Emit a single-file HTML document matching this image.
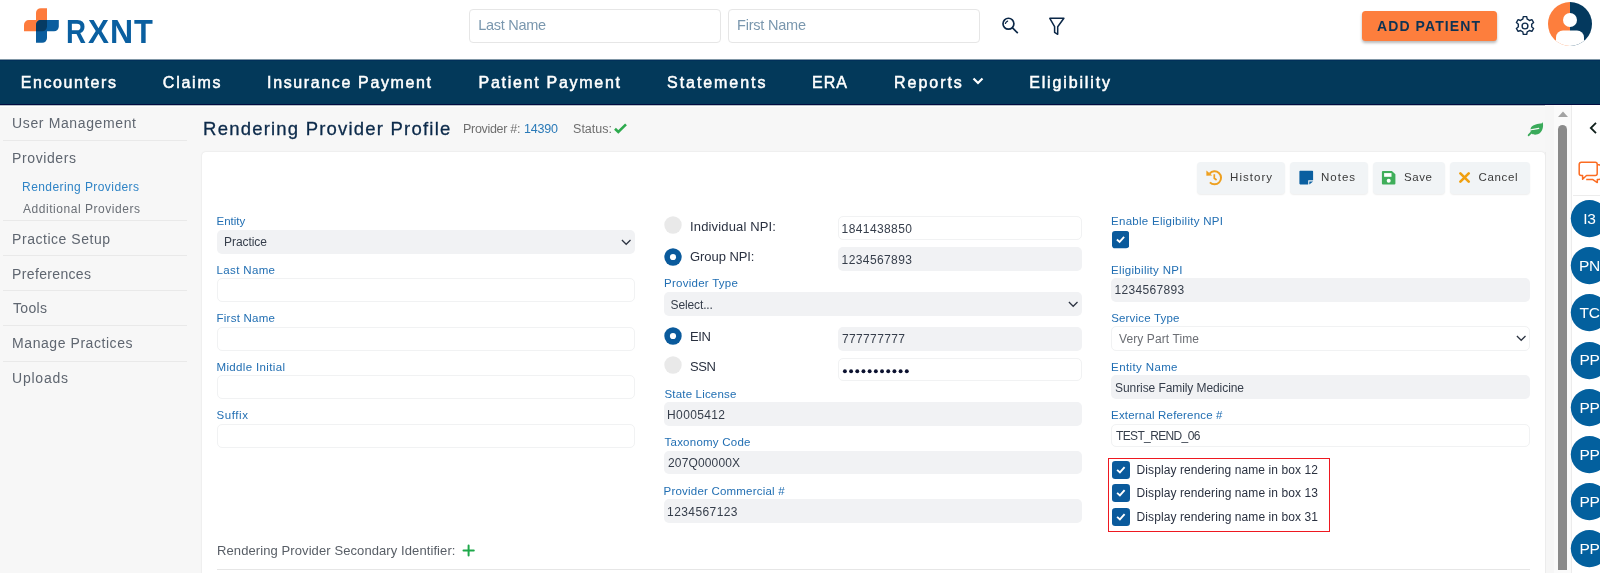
<!DOCTYPE html>
<html><head><meta charset="utf-8"><style>
html,body{margin:0;padding:0;width:1600px;height:573px;overflow:hidden;background:#f7f7f7;position:relative;font-family:"Liberation Sans", sans-serif}
.t{position:absolute;white-space:nowrap;line-height:1;will-change:opacity}
</style></head><body>
<div style="position:absolute;left:0px;top:0px;width:1600px;height:59px;background:#fff"></div>
<svg style="position:absolute;left:0px;top:0px" width="70" height="50" viewBox="0 0 70 50">
<path d="M40.8 8.2 H47 V26.5 A4.8 4.8 0 0 1 42.2 31.3 H24 V24.9 A4.8 4.8 0 0 1 28.8 20.1 H36 V13 A4.8 4.8 0 0 1 40.8 8.2 Z" fill="#fd7b3c"/>
<path d="M40.8 20.1 H58.8 V26.5 A4.8 4.8 0 0 1 54 31.3 H47 V38 A4.8 4.8 0 0 1 42.2 42.8 H36 V24.9 A4.8 4.8 0 0 1 40.8 20.1 Z" fill="#0a5d9e"/>
<path d="M40.8 20.1 H47 V26.5 A4.8 4.8 0 0 1 42.2 31.3 H36 V24.9 A4.8 4.8 0 0 1 40.8 20.1 Z" fill="#063b63"/>
</svg>
<div style="position:absolute;left:65.90px;top:15.07px;font-size:33px;line-height:1;font-weight:bold;color:#0a5fa0;transform:scaleX(0.84);transform-origin:0 0;will-change:opacity">R</div>
<div style="position:absolute;left:88.00px;top:15.07px;font-size:33px;line-height:1;font-weight:bold;color:#0a5fa0;transform:scaleX(0.95);transform-origin:0 0;will-change:opacity">X</div>
<div style="position:absolute;left:110.10px;top:15.07px;font-size:33px;line-height:1;font-weight:bold;color:#0a5fa0;transform:scaleX(0.97);transform-origin:0 0;will-change:opacity">N</div>
<div style="position:absolute;left:134.40px;top:15.07px;font-size:33px;line-height:1;font-weight:bold;color:#0a5fa0;transform:scaleX(0.935);transform-origin:0 0;will-change:opacity">T</div>
<div style="position:absolute;left:469px;top:9px;width:251.5px;height:33.6px;box-sizing:border-box;border:1px solid #e6e6e6;border-radius:4px;background:#fff"></div>
<div style="position:absolute;left:728px;top:9px;width:251.5px;height:33.6px;box-sizing:border-box;border:1px solid #e6e6e6;border-radius:4px;background:#fff"></div>
<div class="t" style="left:478.14px;top:18.13px;font-size:14.5px;color:#7a97ae;letter-spacing:-0.264px;">Last Name</div>
<div class="t" style="left:737.12px;top:18.13px;font-size:14.5px;color:#7a97ae;letter-spacing:-0.226px;">First Name</div>
<svg style="position:absolute;left:998px;top:14px" width="24" height="24" viewBox="0 0 24 24">
<circle cx="10.45" cy="9.7" r="5.45" fill="none" stroke="#0b2747" stroke-width="1.7"/>
<path d="M14.3 13.7 L19.8 19.2" stroke="#0b2747" stroke-width="1.7"/>
<path d="M7.4 9.5 Q7.9 7.9 9.6 7.1" stroke="#0b2747" stroke-width="1.2" fill="none" stroke-linecap="round"/>
</svg>
<svg style="position:absolute;left:1044px;top:14px" width="24" height="24" viewBox="0 0 24 24">
<path d="M5.8 4.3 H19.9 L13.7 12.7 V20.3 L10.6 18.4 V12.7 Z" fill="none" stroke="#0b2747" stroke-width="1.5" stroke-linejoin="round"/>
</svg>
<div style="position:absolute;left:1362px;top:10.6px;width:135px;height:30.4px;background:#fd7e3d;border-radius:3.5px;box-shadow:0 2px 3px rgba(0,0,0,.28)"></div>
<div class="t" style="left:1377.00px;top:18.95px;font-size:14px;color:#0d3354;letter-spacing:1.097px;font-weight:bold;">ADD PATIENT</div>
<svg style="position:absolute;left:1513px;top:14.4px" width="24" height="24" viewBox="0 0 24 24">
<path d="M10.3 2.6 h3.4 l0.5 2.6 a7.2 7.2 0 0 1 2.2 1.3 l2.5 -0.9 l1.7 2.9 l-2 1.7 a7.2 7.2 0 0 1 0 2.6 l2 1.7 l-1.7 2.9 l-2.5 -0.9 a7.2 7.2 0 0 1 -2.2 1.3 l-0.5 2.6 h-3.4 l-0.5 -2.6 a7.2 7.2 0 0 1 -2.2 -1.3 l-2.5 0.9 l-1.7 -2.9 l2 -1.7 a7.2 7.2 0 0 1 0 -2.6 l-2 -1.7 l1.7 -2.9 l2.5 0.9 a7.2 7.2 0 0 1 2.2 -1.3 z" fill="none" stroke="#0d2a4a" stroke-width="1.4" stroke-linejoin="round"/>
<circle cx="12" cy="12" r="2.9" fill="none" stroke="#0d2a4a" stroke-width="1.4"/>
</svg>
<svg style="position:absolute;left:1548px;top:2px" width="44" height="44" viewBox="0 0 44 44">
<defs><clipPath id="cc"><circle cx="22" cy="22" r="22"/></clipPath></defs>
<g clip-path="url(#cc)">
<rect x="0" y="0" width="22" height="44" fill="#fd7e3d"/>
<rect x="22" y="0" width="22" height="44" fill="#04395e"/>
<circle cx="22" cy="18" r="7" fill="#fff"/>
<rect x="8" y="28.5" width="28" height="20" rx="7" fill="#fff"/>
</g></svg>
<div style="position:absolute;left:0px;top:60px;width:1600px;height:45px;background:#03395a"></div>
<div style="position:absolute;left:0px;top:104px;width:1600px;height:1px;background:#020c40"></div>
<div style="position:absolute;left:0px;top:59px;width:1600px;height:1px;background:#8096a6"></div>
<div style="position:absolute;left:0px;top:60px;width:1600px;height:1px;background:#01305a"></div>
<div class="t" style="left:20.64px;top:74.56px;font-size:16px;color:#fff;letter-spacing:1.598px;-webkit-text-stroke:0.5px #fff;">Encounters</div>
<div class="t" style="left:162.85px;top:74.56px;font-size:16px;color:#fff;letter-spacing:1.748px;-webkit-text-stroke:0.5px #fff;">Claims</div>
<div class="t" style="left:267.10px;top:74.56px;font-size:16px;color:#fff;letter-spacing:1.628px;-webkit-text-stroke:0.5px #fff;">Insurance Payment</div>
<div class="t" style="left:478.60px;top:74.56px;font-size:16px;color:#fff;letter-spacing:1.714px;-webkit-text-stroke:0.5px #fff;">Patient Payment</div>
<div class="t" style="left:667.10px;top:74.56px;font-size:16px;color:#fff;letter-spacing:1.932px;-webkit-text-stroke:0.5px #fff;">Statements</div>
<div class="t" style="left:812.10px;top:74.56px;font-size:16px;color:#fff;letter-spacing:1.000px;-webkit-text-stroke:0.5px #fff;">ERA</div>
<div class="t" style="left:894.10px;top:74.56px;font-size:16px;color:#fff;letter-spacing:1.947px;-webkit-text-stroke:0.5px #fff;">Reports</div>
<div class="t" style="left:1029.16px;top:74.56px;font-size:16px;color:#fff;letter-spacing:1.860px;-webkit-text-stroke:0.5px #fff;">Eligibility</div>
<svg style="position:absolute;left:970px;top:75px" width="16" height="12" viewBox="0 0 16 12">
<path d="M3.5 3.5 L8 8 L12.5 3.5" fill="none" stroke="#fff" stroke-width="2.2"/></svg>
<div style="position:absolute;left:0px;top:105px;width:1600px;height:468px;background:#f7f7f7"></div>
<div style="position:absolute;left:0px;top:105px;width:1600px;height:1px;background:#b9c3c9"></div>
<div style="position:absolute;left:0px;top:106px;width:1600px;height:1px;background:#ffffff"></div>
<div class="t" style="left:12.10px;top:116.15px;font-size:14px;color:#5f6670;letter-spacing:0.624px;">User Management</div>
<div style="position:absolute;left:3px;top:140px;width:184px;height:1px;background:#e9e9e9"></div>
<div class="t" style="left:12.10px;top:151.15px;font-size:14px;color:#5f6670;letter-spacing:0.589px;">Providers</div>
<div class="t" style="left:22.06px;top:180.74px;font-size:12px;color:#2f84c6;letter-spacing:0.419px;">Rendering Providers</div>
<div class="t" style="left:22.96px;top:203.34px;font-size:12px;color:#6a6f76;letter-spacing:0.543px;">Additional Providers</div>
<div style="position:absolute;left:3px;top:220px;width:184px;height:1px;background:#e9e9e9"></div>
<div class="t" style="left:12.10px;top:231.75px;font-size:14px;color:#5f6670;letter-spacing:0.527px;">Practice Setup</div>
<div class="t" style="left:12.10px;top:266.65px;font-size:14px;color:#5f6670;letter-spacing:0.342px;">Preferences</div>
<div class="t" style="left:13.00px;top:301.07px;font-size:14px;color:#5f6670;letter-spacing:0.330px;">Tools</div>
<div class="t" style="left:12.10px;top:336.45px;font-size:14px;color:#5f6670;letter-spacing:0.558px;">Manage Practices</div>
<div class="t" style="left:12.10px;top:371.35px;font-size:14px;color:#5f6670;letter-spacing:0.755px;">Uploads</div>
<div style="position:absolute;left:3px;top:255px;width:184px;height:1px;background:#e9e9e9"></div>
<div style="position:absolute;left:3px;top:290px;width:184px;height:1px;background:#e9e9e9"></div>
<div style="position:absolute;left:3px;top:325px;width:184px;height:1px;background:#e9e9e9"></div>
<div style="position:absolute;left:3px;top:361px;width:184px;height:1px;background:#e9e9e9"></div>
<div class="t" style="left:203.10px;top:119.94px;font-size:18.5px;color:#0c2a4a;letter-spacing:1.208px;-webkit-text-stroke:0.3px #0c2a4a;">Rendering Provider Profile</div>
<div class="t" style="left:463.06px;top:122.82px;font-size:12.5px;color:#6f6f6f;letter-spacing:-0.310px;">Provider #:</div>
<div class="t" style="left:524.02px;top:122.82px;font-size:12.5px;color:#2a7ab8;letter-spacing:-0.200px;">14390</div>
<div class="t" style="left:573.10px;top:122.82px;font-size:12.5px;color:#6f6f6f;letter-spacing:-0.025px;">Status:</div>
<svg style="position:absolute;left:613px;top:122px" width="15" height="13" viewBox="0 0 15 13">
<path d="M2 6.8 L5.3 10 L13 2.3" fill="none" stroke="#2eaa4e" stroke-width="2.6"/></svg>
<svg style="position:absolute;left:1522px;top:115px" width="28" height="25" viewBox="0 0 28 25">
<path d="M8.8 13 C10 10.5 14 9 18.5 8.6 C19.5 8.5 20.3 8 20.6 7 C21.6 10 21.3 15 18 18 C15.5 20 11.5 20.3 9.5 18.5 C8.4 17.3 8.3 14.5 8.8 13 Z" fill="#3aaa5a"/>
<path d="M8.6 14.9 L16.8 13.4" stroke="#f7f7f7" stroke-width="1.1" stroke-linecap="round"/>
<path d="M6.7 20.2 L10.8 16" stroke="#3aaa5a" stroke-width="1.9" stroke-linecap="round"/>
</svg>
<div style="position:absolute;left:202px;top:152px;width:1343px;height:430px;background:#fff;border-radius:4px;box-shadow:0 0 2px rgba(0,0,0,.12)"></div>
<div style="position:absolute;left:1197px;top:162px;width:88px;height:31.5px;background:#f1f4f6;border-radius:4px;box-shadow:0 1px 1.5px rgba(0,0,0,.07)"></div>
<div class="t" style="left:1230.10px;top:172.47px;font-size:11.5px;color:#3a3a3a;letter-spacing:1.020px;">History</div>
<svg style="position:absolute;left:1205px;top:169px" width="18" height="18" viewBox="0 0 18 18">
<path d="M4.6 4.6 A6.5 6.5 0 1 1 4.9 13.4" fill="none" stroke="#eea020" stroke-width="2"/>
<path d="M1.4 1.6 L1.4 6.8 L7.2 6.5 Z" fill="#eea020"/>
<path d="M9.3 5.2 V9.3 L11.6 11" fill="none" stroke="#eea020" stroke-width="1.7"/></svg>
<div style="position:absolute;left:1290px;top:162px;width:78px;height:31.5px;background:#f1f4f6;border-radius:4px;box-shadow:0 1px 1.5px rgba(0,0,0,.07)"></div>
<div class="t" style="left:1321.08px;top:172.47px;font-size:11.5px;color:#3a3a3a;letter-spacing:0.970px;">Notes</div>
<svg style="position:absolute;left:1299px;top:170px" width="15" height="15" viewBox="0 0 15 15">
<path d="M0.4 1.6 a0.8 0.8 0 0 1 0.8 -0.8 h12.1 a0.8 0.8 0 0 1 0.8 0.8 V10.2 H9.2 V14.4 H1.2 a0.8 0.8 0 0 1 -0.8 -0.8 Z" fill="#0a5fa0"/>
<path d="M10.3 11.4 H14.1 L10.3 14.5 Z" fill="#0a5fa0"/></svg>
<div style="position:absolute;left:1373px;top:162px;width:72px;height:31.5px;background:#f1f4f6;border-radius:4px;box-shadow:0 1px 1.5px rgba(0,0,0,.07)"></div>
<div class="t" style="left:1404.04px;top:172.47px;font-size:11.5px;color:#3a3a3a;letter-spacing:0.583px;">Save</div>
<svg style="position:absolute;left:1381px;top:170px" width="15" height="15" viewBox="0 0 15 15">
<path d="M0.9 1.9 a1 1 0 0 1 1 -1 H10.9 L14.4 4.2 V13.4 a1 1 0 0 1 -1 1 H1.9 a1 1 0 0 1 -1 -1 Z" fill="#3fae5a"/>
<rect x="3.1" y="3.1" width="7.4" height="3.7" fill="#fff"/>
<circle cx="7.7" cy="10.7" r="2" fill="#fff"/></svg>
<div style="position:absolute;left:1450px;top:162px;width:80px;height:31.5px;background:#f1f4f6;border-radius:4px;box-shadow:0 1px 1.5px rgba(0,0,0,.07)"></div>
<div class="t" style="left:1478.52px;top:172.47px;font-size:11.5px;color:#3a3a3a;letter-spacing:0.632px;">Cancel</div>
<svg style="position:absolute;left:1458px;top:172px" width="13" height="12" viewBox="0 0 13 12">
<path d="M2.4 1.4 L10.7 9.7 M10.7 1.4 L2.4 9.7" stroke="#f0a010" stroke-width="2.6" stroke-linecap="round"/></svg>
<div class="t" style="left:216.54px;top:216.07px;font-size:11.5px;color:#226fb3;letter-spacing:0.000px;">Entity</div>
<div class="t" style="left:216.54px;top:265.07px;font-size:11.5px;color:#226fb3;letter-spacing:0.356px;">Last Name</div>
<div class="t" style="left:216.54px;top:313.27px;font-size:11.5px;color:#226fb3;letter-spacing:0.248px;">First Name</div>
<div class="t" style="left:216.54px;top:361.77px;font-size:11.5px;color:#226fb3;letter-spacing:0.346px;">Middle Initial</div>
<div class="t" style="left:216.54px;top:409.97px;font-size:11.5px;color:#226fb3;letter-spacing:0.570px;">Suffix</div>
<div style="position:absolute;left:216.6px;top:230px;width:418.4px;height:24px;background:#f1f2f4;border-radius:5px"></div>
<div class="t" style="left:224.04px;top:236.24px;font-size:12px;color:#363e4b;letter-spacing:-0.059px;">Practice</div>
<svg style="position:absolute;left:621px;top:239.0px" width="11" height="7" viewBox="0 0 11 7">
<path d="M0.9 1 L5.2 5.3 L9.5 1" fill="none" stroke="#2d3442" stroke-width="1.25"/></svg>
<div style="position:absolute;left:216.6px;top:278.3px;width:418.4px;height:24px;box-sizing:border-box;border:1px solid #f1f2f3;border-radius:5px;background:#fff"></div>
<div style="position:absolute;left:216.6px;top:326.5px;width:418.4px;height:24px;box-sizing:border-box;border:1px solid #f1f2f3;border-radius:5px;background:#fff"></div>
<div style="position:absolute;left:216.6px;top:375.2px;width:418.4px;height:24px;box-sizing:border-box;border:1px solid #f1f2f3;border-radius:5px;background:#fff"></div>
<div style="position:absolute;left:216.6px;top:423.5px;width:418.4px;height:24px;box-sizing:border-box;border:1px solid #f1f2f3;border-radius:5px;background:#fff"></div>
<svg style="position:absolute;left:664.3px;top:216.40px" width="18" height="18" viewBox="0 0 18 18"><circle cx="9" cy="9" r="8.7" fill="#e9e9e9"/></svg>
<div class="t" style="left:690.08px;top:219.80px;font-size:13px;color:#2a3140;letter-spacing:0.141px;">Individual NPI:</div>
<svg style="position:absolute;left:664.3px;top:247.80px" width="18" height="18" viewBox="0 0 18 18"><circle cx="9" cy="9" r="8.7" fill="#0a5a9c"/><circle cx="9" cy="9" r="3.1" fill="#fff"/></svg>
<div class="t" style="left:690.08px;top:250.40px;font-size:13px;color:#2a3140;letter-spacing:-0.074px;">Group NPI:</div>
<div style="position:absolute;left:838.4px;top:216.3px;width:243.60000000000002px;height:23.6px;box-sizing:border-box;border:1px solid #f1f2f3;border-radius:5px;background:#fff"></div>
<div class="t" style="left:841.58px;top:222.74px;font-size:12px;color:#363e4b;letter-spacing:0.404px;">1841438850</div>
<div style="position:absolute;left:838.4px;top:247.2px;width:243.60000000000002px;height:24px;background:#f1f2f4;border-radius:5px"></div>
<div class="t" style="left:841.58px;top:253.84px;font-size:12px;color:#363e4b;letter-spacing:0.404px;">1234567893</div>
<div class="t" style="left:664.04px;top:278.07px;font-size:11.5px;color:#226fb3;letter-spacing:0.255px;">Provider Type</div>
<div style="position:absolute;left:664px;top:291.5px;width:418px;height:24px;background:#f1f2f4;border-radius:5px"></div>
<div class="t" style="left:670.58px;top:298.92px;font-size:12px;color:#363e4b;letter-spacing:-0.129px;">Select...</div>
<svg style="position:absolute;left:1068px;top:300.5px" width="11" height="7" viewBox="0 0 11 7">
<path d="M0.9 1 L5.2 5.3 L9.5 1" fill="none" stroke="#2d3442" stroke-width="1.25"/></svg>
<svg style="position:absolute;left:664.3px;top:327.00px" width="18" height="18" viewBox="0 0 18 18"><circle cx="9" cy="9" r="8.7" fill="#0a5a9c"/><circle cx="9" cy="9" r="3.1" fill="#fff"/></svg>
<div class="t" style="left:690.10px;top:330.20px;font-size:13px;color:#2a3140;letter-spacing:-0.425px;">EIN</div>
<svg style="position:absolute;left:664.3px;top:356.30px" width="18" height="18" viewBox="0 0 18 18"><circle cx="9" cy="9" r="8.7" fill="#e9e9e9"/></svg>
<div class="t" style="left:690.10px;top:359.50px;font-size:13px;color:#2a3140;letter-spacing:-0.445px;">SSN</div>
<div style="position:absolute;left:838.4px;top:326.5px;width:243.60000000000002px;height:24.5px;background:#f1f2f4;border-radius:5px"></div>
<div class="t" style="left:842.00px;top:332.64px;font-size:12px;color:#363e4b;letter-spacing:0.354px;">777777777</div>
<div style="position:absolute;left:838.4px;top:358.3px;width:243.60000000000002px;height:23px;box-sizing:border-box;border:1px solid #f1f2f3;border-radius:5px;background:#fff"></div>
<svg style="position:absolute;left:838px;top:365px" width="80" height="13" viewBox="838 365 80 13"><circle cx="844.90" cy="371.3" r="1.95" fill="#0c1230"/><circle cx="851.09" cy="371.3" r="1.95" fill="#0c1230"/><circle cx="857.28" cy="371.3" r="1.95" fill="#0c1230"/><circle cx="863.47" cy="371.3" r="1.95" fill="#0c1230"/><circle cx="869.66" cy="371.3" r="1.95" fill="#0c1230"/><circle cx="875.85" cy="371.3" r="1.95" fill="#0c1230"/><circle cx="882.04" cy="371.3" r="1.95" fill="#0c1230"/><circle cx="888.23" cy="371.3" r="1.95" fill="#0c1230"/><circle cx="894.42" cy="371.3" r="1.95" fill="#0c1230"/><circle cx="900.61" cy="371.3" r="1.95" fill="#0c1230"/><circle cx="906.80" cy="371.3" r="1.95" fill="#0c1230"/></svg>
<div class="t" style="left:664.50px;top:388.87px;font-size:11.5px;color:#226fb3;letter-spacing:0.176px;">State License</div>
<div style="position:absolute;left:664px;top:402.3px;width:418px;height:23.4px;background:#f1f2f4;border-radius:5px"></div>
<div class="t" style="left:667.10px;top:408.54px;font-size:12px;color:#363e4b;letter-spacing:0.360px;">H0005412</div>
<div class="t" style="left:664.50px;top:437.37px;font-size:11.5px;color:#226fb3;letter-spacing:0.240px;">Taxonomy Code</div>
<div style="position:absolute;left:664px;top:450.7px;width:418px;height:23.5px;background:#f1f2f4;border-radius:5px"></div>
<div class="t" style="left:668.00px;top:456.74px;font-size:12px;color:#363e4b;letter-spacing:0.143px;">207Q00000X</div>
<div class="t" style="left:663.60px;top:485.87px;font-size:11.5px;color:#226fb3;letter-spacing:0.201px;">Provider Commercial #</div>
<div style="position:absolute;left:664px;top:499.1px;width:418px;height:24px;background:#f1f2f4;border-radius:5px"></div>
<div class="t" style="left:667.10px;top:505.64px;font-size:12px;color:#363e4b;letter-spacing:0.407px;">1234567123</div>
<div class="t" style="left:1111.10px;top:216.07px;font-size:11.5px;color:#226fb3;letter-spacing:0.272px;">Enable Eligibility NPI</div>
<svg style="position:absolute;left:1111.8px;top:231.3px" width="17.3" height="17.3" viewBox="0 0 18 18">
<rect x="0" y="0" width="18" height="18" rx="3.2" fill="#0a5a9c"/>
<path d="M5.1 8.9 L7.9 11.4 L12.6 6.1" fill="none" stroke="#fff" stroke-width="1.9"/></svg>
<div class="t" style="left:1111.10px;top:265.37px;font-size:11.5px;color:#226fb3;letter-spacing:0.303px;">Eligibility NPI</div>
<div style="position:absolute;left:1111.3px;top:278px;width:418.9000000000001px;height:24px;background:#f1f2f4;border-radius:5px"></div>
<div class="t" style="left:1114.62px;top:284.24px;font-size:12px;color:#363e4b;letter-spacing:0.302px;">1234567893</div>
<div class="t" style="left:1111.20px;top:313.07px;font-size:11.5px;color:#226fb3;letter-spacing:0.172px;">Service Type</div>
<div style="position:absolute;left:1111.3px;top:326.2px;width:418.9000000000001px;height:24.4px;box-sizing:border-box;border:1px solid #f1f2f3;border-radius:5px;background:#fff"></div>
<div class="t" style="left:1118.98px;top:333.14px;font-size:12px;color:#6b6e74;letter-spacing:0.099px;">Very Part Time</div>
<svg style="position:absolute;left:1516.2px;top:335.4px" width="11" height="7" viewBox="0 0 11 7">
<path d="M0.9 1 L5.2 5.3 L9.5 1" fill="none" stroke="#2d3442" stroke-width="1.25"/></svg>
<div class="t" style="left:1111.10px;top:361.87px;font-size:11.5px;color:#226fb3;letter-spacing:0.379px;">Entity Name</div>
<div style="position:absolute;left:1111.3px;top:375.4px;width:418.9000000000001px;height:23.4px;background:#f1f2f4;border-radius:5px"></div>
<div class="t" style="left:1115.04px;top:381.64px;font-size:12px;color:#363e4b;letter-spacing:-0.080px;">Sunrise Family Medicine</div>
<div class="t" style="left:1111.10px;top:410.07px;font-size:11.5px;color:#226fb3;letter-spacing:0.178px;">External Reference #</div>
<div style="position:absolute;left:1111.3px;top:423.7px;width:418.9000000000001px;height:23.6px;box-sizing:border-box;border:1px solid #f1f2f3;border-radius:5px;background:#fff"></div>
<div class="t" style="left:1115.94px;top:430.14px;font-size:12px;color:#363e4b;letter-spacing:-0.630px;">TEST_REND_06</div>
<div style="position:absolute;left:1107.6px;top:457.6px;width:222.2px;height:74.4px;box-sizing:border-box;border:1.8px solid #ee1820"></div>
<svg style="position:absolute;left:1111.9px;top:460.8px" width="18" height="18" viewBox="0 0 18 18">
<rect x="0" y="0" width="18" height="18" rx="3.2" fill="#0a5a9c"/>
<path d="M5.1 8.9 L7.9 11.4 L12.6 6.1" fill="none" stroke="#fff" stroke-width="1.9"/></svg>
<div class="t" style="left:1136.60px;top:463.74px;font-size:12px;color:#2a3140;letter-spacing:0.081px;">Display rendering name in box 12</div>
<svg style="position:absolute;left:1111.9px;top:484.4px" width="18" height="18" viewBox="0 0 18 18">
<rect x="0" y="0" width="18" height="18" rx="3.2" fill="#0a5a9c"/>
<path d="M5.1 8.9 L7.9 11.4 L12.6 6.1" fill="none" stroke="#fff" stroke-width="1.9"/></svg>
<div class="t" style="left:1136.60px;top:487.39px;font-size:12px;color:#2a3140;letter-spacing:0.085px;">Display rendering name in box 13</div>
<svg style="position:absolute;left:1111.9px;top:508.1px" width="18" height="18" viewBox="0 0 18 18">
<rect x="0" y="0" width="18" height="18" rx="3.2" fill="#0a5a9c"/>
<path d="M5.1 8.9 L7.9 11.4 L12.6 6.1" fill="none" stroke="#fff" stroke-width="1.9"/></svg>
<div class="t" style="left:1136.60px;top:511.04px;font-size:12px;color:#2a3140;letter-spacing:0.085px;">Display rendering name in box 31</div>
<div class="t" style="left:217.02px;top:544.40px;font-size:13px;color:#585e66;letter-spacing:0.092px;">Rendering Provider Secondary Identifier:</div>
<svg style="position:absolute;left:462px;top:543.5px" width="13" height="13" viewBox="0 0 13 13">
<path d="M6.6 1.6 V11.6 M1.5 6.5 H11.8" stroke="#1ea84a" stroke-width="2" stroke-linecap="round"/></svg>
<div style="position:absolute;left:217px;top:569px;width:1313px;height:1px;background:#e6e6e6"></div>
<div style="position:absolute;left:1545px;top:105px;width:26px;height:468px;background:#f6f6f6"></div>
<div style="position:absolute;left:1545px;top:152px;width:1px;height:421px;background:#ececec"></div>
<div style="position:absolute;left:1554px;top:105px;width:17px;height:468px;background:#fafafa"></div>
<svg style="position:absolute;left:1557px;top:110px" width="12" height="8" viewBox="0 0 12 8">
<path d="M1 7 L6 1.5 L11 7 Z" fill="#a3a3a3"/></svg>
<div style="position:absolute;left:1558px;top:125px;width:9px;height:445px;background:#8a8a8a;border-radius:4.5px 4.5px 0 0"></div>
<div style="position:absolute;left:1571px;top:105px;width:29px;height:468px;background:#fff;border-left:1px solid #ececec"></div>
<svg style="position:absolute;left:1587px;top:121px" width="12" height="14" viewBox="0 0 12 14">
<path d="M9 1.8 L3.8 7 L9 12.2" fill="none" stroke="#10201c" stroke-width="1.8"/></svg>
<svg style="position:absolute;left:1578px;top:161px" width="30" height="24" viewBox="0 0 30 24">
<path d="M3.2 1.3 H17.2 A2 2 0 0 1 19.2 3.3 V12.5 A2 2 0 0 1 17.2 14.5 H8.5 L4.6 18.3 V14.5 H3.2 A2 2 0 0 1 1.2 12.5 V3.3 A2 2 0 0 1 3.2 1.3 Z" fill="none" stroke="#fb6c22" stroke-width="1.5" stroke-linejoin="round"/>
<path d="M19.2 3.8 H21 A2 2 0 0 1 23 5.8 V16.4 A2 2 0 0 1 21 18.4 H19.3 V21.6 L14.5 18.4 H8.2" fill="none" stroke="#fb6c22" stroke-width="1.5" stroke-linejoin="round"/></svg>
<div style="position:absolute;left:1573px;top:194.5px;width:27px;height:1px;background:#ececec"></div>
<svg style="position:absolute;left:1570px;top:199.00px" width="40" height="40" viewBox="0 0 40 40"><circle cx="19.4" cy="19.6" r="18.6" fill="#03609e"/></svg>
<div class="t" style="left:1570px;width:39px;text-align:center;top:210.88px;font-size:15.5px;color:#fff;letter-spacing:-0.3px">I3</div>
<svg style="position:absolute;left:1570px;top:246.19px" width="40" height="40" viewBox="0 0 40 40"><circle cx="19.4" cy="19.6" r="18.6" fill="#03609e"/></svg>
<div class="t" style="left:1570px;width:39px;text-align:center;top:258.07px;font-size:15.5px;color:#fff;letter-spacing:-0.3px">PN</div>
<svg style="position:absolute;left:1570px;top:293.38px" width="40" height="40" viewBox="0 0 40 40"><circle cx="19.4" cy="19.6" r="18.6" fill="#03609e"/></svg>
<div class="t" style="left:1570px;width:39px;text-align:center;top:305.26px;font-size:15.5px;color:#fff;letter-spacing:-0.3px">TC</div>
<svg style="position:absolute;left:1570px;top:340.57px" width="40" height="40" viewBox="0 0 40 40"><circle cx="19.4" cy="19.6" r="18.6" fill="#03609e"/></svg>
<div class="t" style="left:1570px;width:39px;text-align:center;top:352.45px;font-size:15.5px;color:#fff;letter-spacing:-0.3px">PP</div>
<svg style="position:absolute;left:1570px;top:387.76px" width="40" height="40" viewBox="0 0 40 40"><circle cx="19.4" cy="19.6" r="18.6" fill="#03609e"/></svg>
<div class="t" style="left:1570px;width:39px;text-align:center;top:399.64px;font-size:15.5px;color:#fff;letter-spacing:-0.3px">PP</div>
<svg style="position:absolute;left:1570px;top:434.95px" width="40" height="40" viewBox="0 0 40 40"><circle cx="19.4" cy="19.6" r="18.6" fill="#03609e"/></svg>
<div class="t" style="left:1570px;width:39px;text-align:center;top:446.83px;font-size:15.5px;color:#fff;letter-spacing:-0.3px">PP</div>
<svg style="position:absolute;left:1570px;top:482.14px" width="40" height="40" viewBox="0 0 40 40"><circle cx="19.4" cy="19.6" r="18.6" fill="#03609e"/></svg>
<div class="t" style="left:1570px;width:39px;text-align:center;top:494.02px;font-size:15.5px;color:#fff;letter-spacing:-0.3px">PP</div>
<svg style="position:absolute;left:1570px;top:529.33px" width="40" height="40" viewBox="0 0 40 40"><circle cx="19.4" cy="19.6" r="18.6" fill="#03609e"/></svg>
<div class="t" style="left:1570px;width:39px;text-align:center;top:541.21px;font-size:15.5px;color:#fff;letter-spacing:-0.3px">PP</div>
</body></html>
